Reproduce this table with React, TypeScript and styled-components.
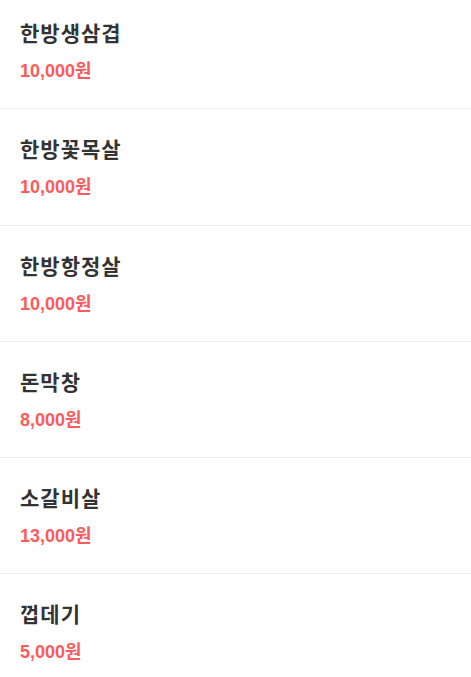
import styled, { createGlobalStyle } from "styled-components";

const menu = [
    { name: "한방생삼겹", price: 10000 },
    { name: "한방꽃목살", price: 10000 },
    { name: "한방항정살", price: 10000 },
    { name: "돈막창", price: 8000 },
    { name: "소갈비살", price: 13000 },
    { name: "껍데기", price: 5000 },
];

export default function App() {
    return (
        <>
            <GlobalStyle />
            <List>
                {menu.map((item) => (
                    <Item key={item.name}>
                        <Name>{item.name}</Name>
                        <Price>{item.price.toLocaleString("ko-KR")}원</Price>
                    </Item>
                ))}
            </List>
        </>
    );
}

const GlobalStyle = createGlobalStyle`
    * {
        box-sizing: border-box;
    }
    body {
        margin: 0;
        background: #ffffff;
        font-family: "Liberation Sans", "Noto Sans CJK KR", sans-serif;
    }
`;

const List = styled.ul`
    list-style: none;
    margin: 0;
    padding: 0;
    display: flex;
    flex-direction: column;
`;

const Item = styled.li`
    display: flex;
    flex-direction: column;
    gap: 12px;
    padding: 25px 20px 24.25px;
    border-bottom: 1px solid #eeeeee;

    &:first-child {
        padding-top: 18px;
    }
`;

const Name = styled.span`
    font-family: "Noto Sans CJK KR", sans-serif;
    font-size: 21px;
    line-height: 28px;
    font-weight: 700;
    letter-spacing: 1px;
    color: #333333;
`;

const Price = styled.span`
    font-size: 18px;
    line-height: 26px;
    font-weight: 700;
    color: #ff5a5a;
`;
